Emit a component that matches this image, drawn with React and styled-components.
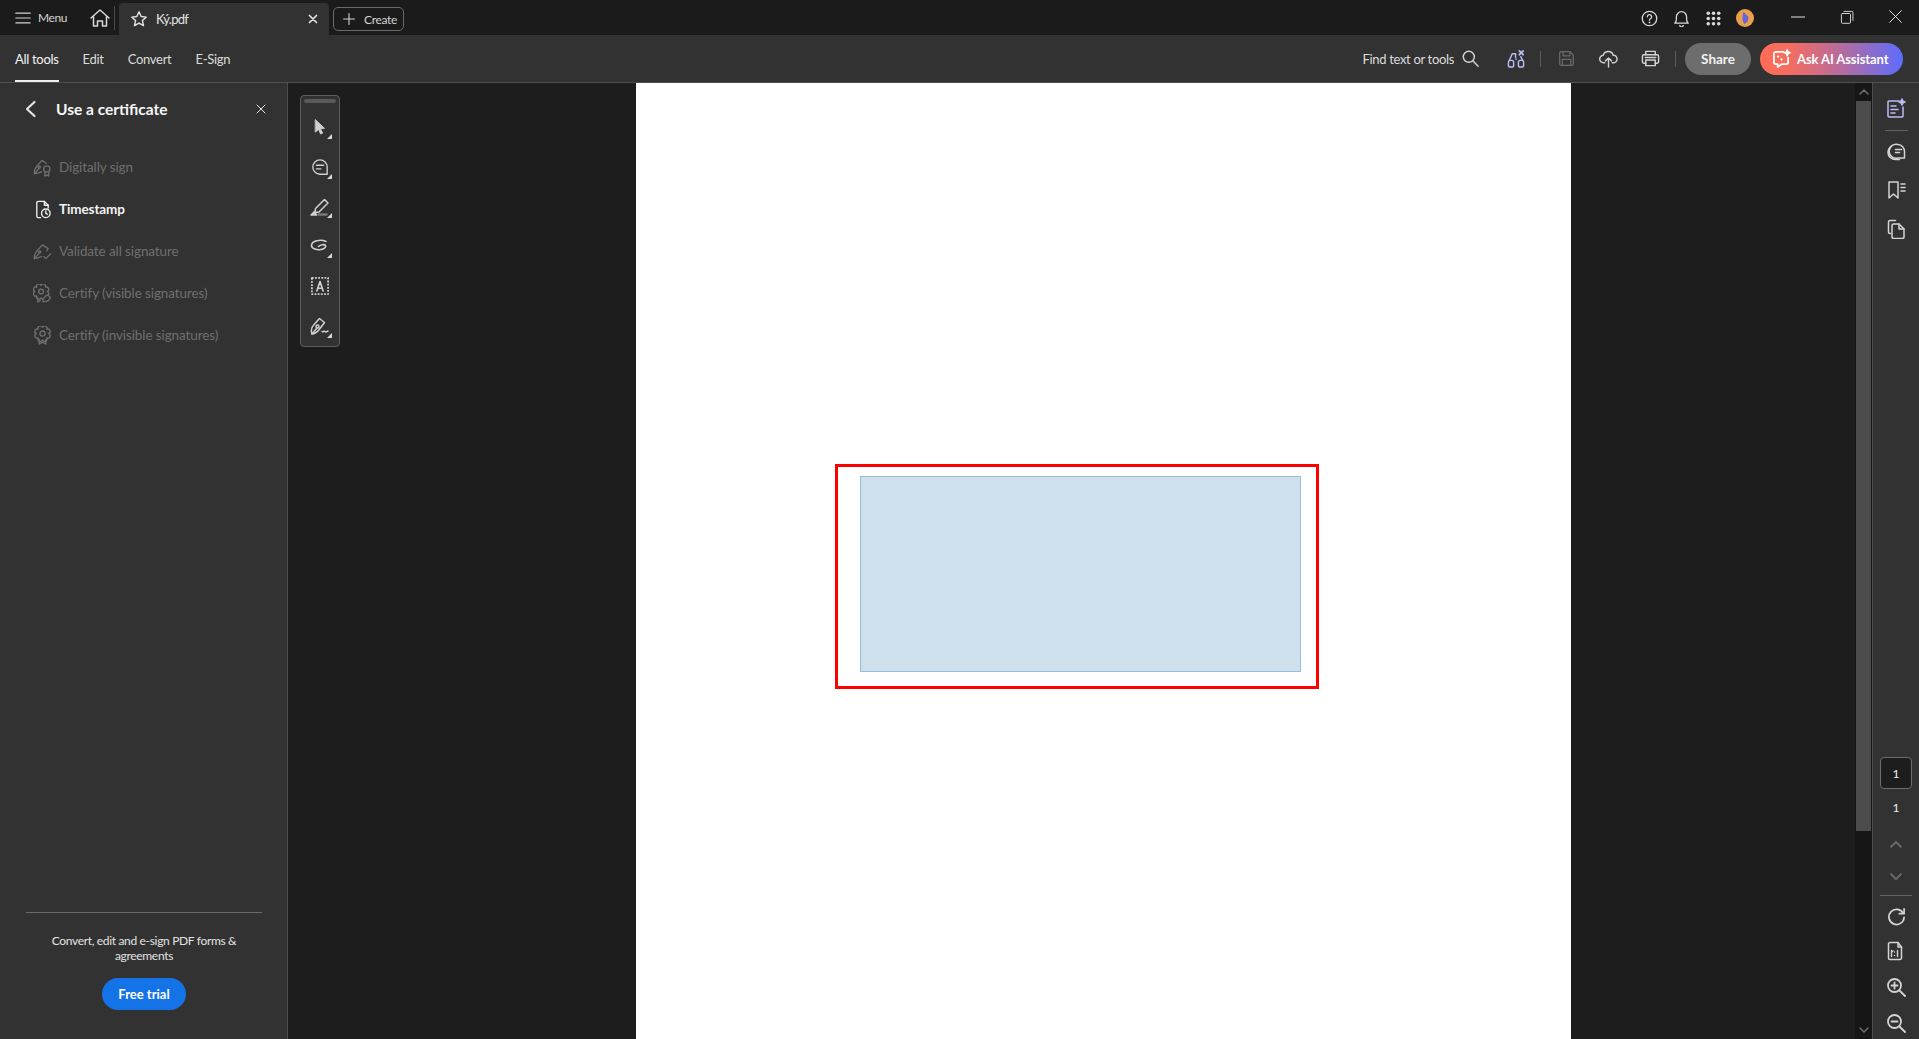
import styled, { createGlobalStyle } from "styled-components";

const GlobalStyle = createGlobalStyle`
  html, body { margin: 0; padding: 0; height: 100%; overflow: hidden; background: #1d1d1d; }
  #root { height: 100%; }
  * { box-sizing: border-box; }
  body { font-family: "Lato", "Open Sans", sans-serif; color: #e6e6e6; }
`;

const Shell = styled.div`
  display: flex;
  flex-direction: column;
  width: 1919px;
  height: 1039px;
  overflow: hidden;
`;

/* ---- title bar ---- */
const TitleBar = styled.header`
  display: flex;
  align-items: flex-end;
  height: 35px;
  flex: none;
  background: #1b1b1b;
`;
const MenuButton = styled.div`
  display: flex;
  align-items: center;
  gap: 7px;
  height: 35px;
  width: 90px;
  padding-left: 15px;
  font-size: 12px;
  letter-spacing: -0.4px;
  color: #d4d4d4;
`;
const HomeWrap = styled.div`
  display: flex;
  align-items: center;
  height: 35px;
  width: 29px;
  color: #d8d8d8;
  &::after {
    content: "";
    width: 1px;
    height: 24px;
    margin-left: 4px;
    background: #4a4a4a;
  }
`;
const Tab = styled.div`
  display: flex;
  align-items: center;
  width: 210px;
  height: 32px;
  padding: 0 11px 0 11px;
  border-radius: 4px 4px 0 0;
  background: #323232;
  font-size: 13px;
  letter-spacing: -0.7px;
  color: #e2e2e2;
  span { margin-left: 8px; flex: 1; }
`;
const CreateButton = styled.div`
  display: flex;
  align-items: center;
  gap: 9px;
  width: 71px;
  height: 24px;
  margin: 0 0 4px 4px;
  padding-left: 9px;
  border: 1px solid #6a6a6a;
  border-radius: 5px;
  font-size: 12px;
  letter-spacing: -0.3px;
  color: #d4d4d4;
`;
const TitleRight = styled.div`
  display: flex;
  align-items: center;
  height: 35px;
  margin-left: auto;
  color: #d8d8d8;
`;
const TopIcon = styled.div`
  display: flex;
  justify-content: center;
  width: 32px;
  padding-top: 1px;
`;
const WinControls = styled.div`
  display: flex;
  margin-left: 30px;
  margin-right: 17px;
  gap: 35px;
  align-items: center;
  padding-bottom: 2px;
  color: #e4e4e4;
`;

/* ---- tool bar ---- */
const ToolBar = styled.div`
  display: flex;
  align-items: center;
  height: 48px;
  flex: none;
  padding: 0 16px 0 15px;
  background: #323232;
  border-bottom: 1px solid #505050;
`;
const NavLink = styled.a`
  position: relative;
  display: flex;
  align-items: center;
  height: 47px;
  margin-right: 24px;
  font-size: 13px;
  letter-spacing: -0.3px;
  color: ${(p) => (p.$active ? "#f4f4f4" : "#dcdcdc")};
  ${(p) =>
    p.$active &&
    `&::after {
      content: "";
      position: absolute;
      left: 0;
      right: 0;
      bottom: 0;
      height: 2px;
      background: #f0f0f0;
    }`}
`;
const ToolRight = styled.div`
  display: flex;
  align-items: center;
  margin-left: auto;
  height: 47px;
  color: #d4d4d4;
`;
const FindText = styled.span`
  font-size: 13px;
  letter-spacing: -0.33px;
  color: #dcdcdc;
  margin-right: 8px;
`;
const ToolIcon = styled.div`
  display: flex;
  margin-left: ${(p) => p.$ml || 0}px;
  color: ${(p) => p.$color || "inherit"};
`;
const VDivider = styled.div`
  width: 1px;
  height: 16px;
  margin-left: ${(p) => p.$ml}px;
  background: #5c5c5c;
`;
const ShareButton = styled.button`
  width: 66px;
  height: 32px;
  margin-left: 9px;
  padding: 0;
  border: 0;
  border-radius: 16px;
  background: #6d6d6d;
  color: #f2f2f2;
  font: 700 13.5px "Lato", sans-serif;
`;
const AskButton = styled.button`
  display: flex;
  align-items: center;
  gap: 6px;
  width: 143px;
  height: 32px;
  margin-left: 9px;
  padding: 0 0 0 12px;
  border: 0;
  border-radius: 16px;
  background: linear-gradient(90deg, #ff6c55 0%, #f56d60 20%, #b46c9f 58%, #5c6dfd 100%);
  color: #fff;
  font: 700 13px "Lato", sans-serif;
  letter-spacing: -0.1px;
  white-space: nowrap;
`;

/* ---- main area ---- */
const Main = styled.main`
  display: flex;
  flex: 1;
  min-height: 0;
`;
const Sidebar = styled.aside`
  display: flex;
  flex-direction: column;
  width: 288px;
  flex: none;
  background: #323232;
  border-right: 1px solid #4c4c4c;
`;
const SideHead = styled.div`
  display: flex;
  align-items: center;
  height: 44px;
  margin-top: 4px;
  padding: 0 21px 0 20px;
  color: #e4e4e4;
`;
const SideTitle = styled.h2`
  flex: 1;
  margin: 0 0 0 16px;
  font-size: 15.5px;
  font-weight: 700;
  color: #f6f6f6;
`;
const SideList = styled.ul`
  list-style: none;
  margin: 15px 0 0;
  padding: 0;
`;
const SideItem = styled.li`
  display: flex;
  align-items: center;
  gap: 7px;
  height: 42px;
  padding-left: 33px;
  font-size: 13.5px;
  letter-spacing: -0.1px;
  font-weight: ${(p) => (p.$active ? 700 : 400)};
  color: ${(p) => (p.$active ? "#f2f2f2" : "#6f6f6f")};
`;
const SideFoot = styled.div`
  margin: auto 25px 0 26px;
  height: 127px;
  border-top: 1px solid #6a6a6a;
  padding-top: 20px;
  text-align: center;
  font-size: 12px;
  line-height: 15px;
  letter-spacing: -0.33px;
  color: #e2e2e2;
`;
const TrialButton = styled.button`
  display: block;
  width: 84px;
  height: 32px;
  margin: 15px auto 0;
  padding: 0;
  border: 0;
  border-radius: 16px;
  background: #1473e6;
  color: #fff;
  font: 700 13px "Lato", sans-serif;
`;
const Gutter = styled.div`
  width: 348px;
  flex: none;
  padding: 12px 0 0 12px;
  background: #1d1d1d;
`;
const QuickTools = styled.div`
  position: relative;
  display: flex;
  flex-direction: column;
  align-items: center;
  width: 40px;
  height: 252px;
  padding-top: 11px;
  background: #323232;
  border: 1px solid #5e5e5e;
  border-radius: 4px;
  color: #d0d0d0;
  &::before {
    content: "";
    position: absolute;
    top: 3px;
    left: 3px;
    right: 3px;
    height: 4px;
    border-radius: 2px;
    background: #5a5a5a;
  }
`;
const QuickTool = styled.div`
  position: relative;
  display: flex;
  align-items: center;
  justify-content: center;
  width: 38px;
  height: 40px;
  ${(p) =>
    p.$corner &&
    `&::after {
      content: "";
      position: absolute;
      right: 7px;
      bottom: 8px;
      border-style: solid;
      border-width: 0 0 5px 5px;
      border-color: transparent transparent #d8d8d8 transparent;
    }`}
`;
const Page = styled.section`
  width: 935px;
  flex: none;
  padding: 381px 0 0 199px;
  background: #fff;
`;
const RedFrame = styled.div`
  width: 484px;
  height: 225px;
  padding: 9px 0 0 22px;
  border: 3px solid #ff0000;
`;
const BlueField = styled.div`
  width: 441px;
  height: 196px;
  background: #cde0ec;
  border: 1px solid #97bdd8;
`;
const Backdrop = styled.div`
  width: 284px;
  flex: none;
  background: #1d1d1d;
`;
const ScrollBar = styled.div`
  display: flex;
  flex-direction: column;
  width: 17px;
  flex: none;
  background: #161616;
  color: #6f6f6f;
`;
const ScrollArrow = styled.div`
  display: flex;
  align-items: center;
  justify-content: center;
  height: ${(p) => p.$h}px;
`;
const ScrollThumb = styled.div`
  height: 730px;
  margin-left: 1px;
  width: 15px;
  background: #4c4c4c;
`;
const ScrollSpace = styled.div`
  flex: 1;
`;
const RightPanel = styled.aside`
  display: flex;
  flex-direction: column;
  align-items: center;
  width: 47px;
  flex: none;
  background: #323232;
  border-left: 1px solid #4c4c4c;
  color: #d4d4d4;
`;
const PanelIcon = styled.div`
  display: flex;
  align-items: center;
  justify-content: center;
  width: 100%;
  height: ${(p) => p.$h || 38}px;
  padding-top: ${(p) => p.$pt || 0}px;
  color: ${(p) => p.$color || "inherit"};
`;
const PanelRule = styled.div`
  width: ${(p) => p.$w}px;
  height: 1px;
  margin: ${(p) => p.$m};
  background: #626262;
`;
const PanelSpace = styled.div`
  flex: 1;
`;
const PageBox = styled.div`
  display: flex;
  align-items: center;
  justify-content: center;
  width: 32px;
  height: 32px;
  border: 1px solid #6c6c6c;
  border-radius: 4px;
  background: #1d1d1d;
  font-size: 12px;
  color: #f0f0f0;
`;
const PageCount = styled.div`
  margin: 7px 0 9px;
  height: 24px;
  line-height: 24px;
  font-size: 12px;
  color: #f0f0f0;
`;

const Svg = styled.svg.attrs((p) => ({
  viewBox: "0 0 20 20",
  width: p.$size || 20,
  height: p.$size || 20,
  fill: "none",
  stroke: "currentColor",
  strokeWidth: p.$sw || 1.5,
  strokeLinecap: "round",
  strokeLinejoin: "round",
}))`
  display: block;
  flex: none;
`;

// scalloped seal outline for the certificate icons
function seal(cx, cy, r, n) {
  let d = "";
  for (let i = 0; i < n; i++) {
    const a = (i / n) * Math.PI * 2;
    const x = (cx + r * Math.cos(a)).toFixed(2);
    const y = (cy + r * Math.sin(a)).toFixed(2);
    d += i === 0 ? `M${x} ${y}` : `A2.300 2.300 0 0 1 ${x} ${y}`;
  }
  const x0 = (cx + r).toFixed(2);
  return `${d}A2.300 2.300 0 0 1 ${x0} ${cy}Z`;
}

const ITEMS = [
  {
    label: "Digitally sign",
    icon: (
      <>
        <path d="M1.500 16.500c-.5-3 1-6 2.500-8L9.500 2.500l4.500 3" />
        <path d="M1.500 16.500l5-5.500M1.500 16.500c2.500-.3 5-1 7.500-2" />
        <circle cx="6.500" cy="9.500" r="1.200" />
        <circle cx="14.500" cy="11.500" r="3.300" />
        <path d="M12.500 15v4l2-1 2 1v-4" />
      </>
    ),
  },
  {
    label: "Timestamp",
    active: true,
    icon: (
      <>
        <path d="M8 18.500H5.500A1.500 1.500 0 0 1 4 17V3a1.500 1.500 0 0 1 1.500-1.500H12l4 4v3" />
        <path d="M12 1.500v4h4" />
        <circle cx="13.500" cy="14" r="4.500" />
        <path d="M13.500 11.500V14l1.800 1" />
      </>
    ),
  },
  {
    label: "Validate all signature",
    icon: (
      <>
        <path d="M1.500 17.500c-.5-3 1-6 2.500-8L10 3l6 4-1.500 2.500" />
        <path d="M1.500 17.500l5-5.500M1.500 17.500c2.500-.3 5-1 7.500-2" />
        <circle cx="7" cy="10.500" r="1.200" />
        <path d="M11.500 15.500l2 2 5-5" />
      </>
    ),
  },
  {
    label: "Certify (visible signatures)",
    icon: (
      <>
        <path d={seal(8.500, 8, 6.500, 8)} />
        <circle cx="8.500" cy="8" r="2.500" />
        <path d="M5 14v5l2.500-1.500" />
        <path d="M10.500 18.500c-.3-2 .3-3.500 1.500-4.500l3-2.500 3.500 2.500-2 3c-1.500 1.300-3.500 1.700-6 1.500z" fill="#323232" />
      </>
    ),
  },
  {
    label: "Certify (invisible signatures)",
    icon: (
      <>
        <path d={seal(10, 8, 6.500, 8)} />
        <circle cx="10" cy="8" r="2.700" />
        <path d="M6.500 14v5l3.500-2 3.500 2v-5" />
      </>
    ),
  },
];

function App() {
  return (
    <Shell>
      <GlobalStyle />
      <TitleBar>
        <MenuButton>
          <Svg $size={16}>
            <path d="M1 4h18M1 10h18M1 16h18" />
          </Svg>
          Menu
        </MenuButton>
        <HomeWrap>
          <Svg>
            <path d="M1 10l9-8 9 8M3.500 8.500V18h4v-5h5v5h4V8.500" />
          </Svg>
        </HomeWrap>
        <Tab>
          <Svg $size={18} $sw={1.6}>
            <path d="M10 2l2.400 5.300 5.600.6-4.200 3.800 1.200 5.700-5-2.900-5 2.900 1.200-5.700L2 7.900l5.600-.6z" />
          </Svg>
          <span>Ký.pdf</span>
          <Svg $size={10} $sw={3.400}>
            <path d="M3 3l14 14M17 3L3 17" />
          </Svg>
        </Tab>
        <CreateButton>
          <Svg $size={12} $sw={1.800}>
            <path d="M10 1v18M1 10h18" />
          </Svg>
          Create
        </CreateButton>
        <TitleRight>
          <TopIcon>
            <Svg $size={17}>
              <circle cx="10" cy="10" r="8.500" />
              <path d="M7.500 8a2.500 2.500 0 1 1 3.500 2.300c-.7.400-1 .8-1 1.700" />
              <path d="M10 14.500v.2" strokeWidth="2" />
            </Svg>
          </TopIcon>
          <TopIcon>
            <Svg $size={17}>
              <path d="M2 15.500c1.500-1 2-2.500 2-5V8a6 6 0 0 1 12 0v2.500c0 2.500.5 4 2 5z" />
              <path d="M8 18a2 2 0 0 0 4 0" />
            </Svg>
          </TopIcon>
          <TopIcon>
            <Svg $size={15}>
              {[3, 10, 17].map((y) =>
                [3, 10, 17].map((x) => <circle key={`${x}-${y}`} cx={x} cy={y} r="2.400" fill="currentColor" stroke="none" />)
              )}
            </Svg>
          </TopIcon>
          <TopIcon>
            <Svg $size={18}>
              <circle cx="10" cy="10" r="10" fill="#e8a04c" stroke="none" />
              <path d="M8 3l6 6-1 5-4 3-2-6z" fill="#6a62d8" stroke="none" />
            </Svg>
          </TopIcon>
          <WinControls>
            <Svg $size={14} $sw={1.600}>
              <path d="M0 10h20" />
            </Svg>
            <Svg $size={14} $sw={1.300}>
              <rect x="2" y="5" width="13" height="14" rx="1.500" />
              <path d="M5.500 2H17a1.500 1.500 0 0 1 1.500 1.500V15" />
            </Svg>
            <Svg $size={13} $sw={1.500}>
              <path d="M1 1l18 18M19 1L1 19" />
            </Svg>
          </WinControls>
        </TitleRight>
      </TitleBar>

      <ToolBar>
        <NavLink $active>All tools</NavLink>
        <NavLink>Edit</NavLink>
        <NavLink>Convert</NavLink>
        <NavLink>E-Sign</NavLink>
        <ToolRight>
          <FindText>Find text or tools</FindText>
          <Svg $size={17} $sw={1.700}>
            <circle cx="8" cy="8" r="6.500" />
            <path d="M13 13l6 6" />
          </Svg>
          <ToolIcon $ml={28} $color="#b9bdf7">
            <Svg $size={19}>
              <path d="M2.500 12l3-7h3.500M9 5v4M16.500 12l-2-4" />
              <rect x="1.500" y="12" width="5.500" height="7" rx="2" />
              <rect x="12" y="12" width="5.500" height="7" rx="2" />
              <path d="M9.500 10.500v.5" />
              <path d="M13 2l4 4M17 2l-4 4" strokeWidth="2" />
            </Svg>
          </ToolIcon>
          <VDivider $ml={14} />
          <ToolIcon $ml={17} $color="#6a6a6a">
            <Svg $size={17}>
              <path d="M2 3.500A1.500 1.500 0 0 1 3.500 2H14l4 4v10.500a1.500 1.500 0 0 1-1.500 1.500h-13A1.500 1.500 0 0 1 2 16.500z" />
              <path d="M6 2v5h8V2M5 18v-7h10v7" />
            </Svg>
          </ToolIcon>
          <ToolIcon $ml={24}>
            <Svg $size={19}>
              <path d="M6 14.500H5a4 4 0 0 1-.5-8 5.500 5.500 0 0 1 10.500 0 4 4 0 0 1 0 8h-1" />
              <path d="M10 19V9.500M6.800 12.500L10 9.500l3.200 3" />
            </Svg>
          </ToolIcon>
          <ToolIcon $ml={23}>
            <Svg $size={19}>
              <path d="M5 6V2.500h10V6" />
              <path d="M5 15H3a1.500 1.500 0 0 1-1.500-1.500v-6A1.500 1.500 0 0 1 3 6h14a1.500 1.500 0 0 1 1.500 1.500v6A1.500 1.500 0 0 1 17 15h-2" />
              <rect x="5" y="11.500" width="10" height="6" />
              <path d="M4.500 9h11" />
            </Svg>
          </ToolIcon>
          <VDivider $ml={15} />
          <ShareButton>Share</ShareButton>
          <AskButton>
            <Svg $size={19} $sw={1.800}>
              <path d="M12 3H4a2 2 0 0 0-2 2v9a2 2 0 0 0 2 2h2v3l4-3h5a2 2 0 0 0 2-2V9" />
              <path d="M6.500 8v.1M10 11v.1" strokeWidth="2.400" />
              <path d="M16 1l.8 2.200L19 4l-2.200.8L16 7l-.8-2.200L13 4l2.200-.8z" fill="currentColor" />
            </Svg>
            Ask AI Assistant
          </AskButton>
        </ToolRight>
      </ToolBar>

      <Main>
        <Sidebar>
          <SideHead>
            <Svg $sw={2.200}>
              <path d="M14.500 3L7 10l7.500 7" />
            </Svg>
            <SideTitle>Use a certificate</SideTitle>
            <Svg $size={10} $sw={2}>
              <path d="M2 2l16 16M18 2L2 18" />
            </Svg>
          </SideHead>
          <SideList>
            {ITEMS.map((item) => (
              <SideItem key={item.label} $active={item.active}>
                <Svg $size={19} $sw={1.400}>
                  {item.icon}
                </Svg>
                {item.label}
              </SideItem>
            ))}
          </SideList>
          <SideFoot>
            Convert, edit and e-sign PDF forms &amp; agreements
            <TrialButton>Free trial</TrialButton>
          </SideFoot>
        </Sidebar>

        <Gutter>
          <QuickTools>
            <QuickTool $corner>
              <Svg $size={18} $sw={1}>
                <path d="M5 2l10 9.500-4.500.3 2.500 5-2.300 1-2.300-5L5 15.500z" fill="currentColor" />
              </Svg>
            </QuickTool>
            <QuickTool $corner>
              <Svg $size={18}>
                <path d="M10 2a8 8 0 1 0 0 16h8v-8a8 8 0 0 0-8-8z" />
                <path d="M6 8h8M6 12h5" />
              </Svg>
            </QuickTool>
            <QuickTool $corner>
              <Svg $size={20}>
                <path d="M5.500 11.500L14.500 2.500l3.500 3.500-9 9-4 .5z" />
                <path d="M1 18l3.500-3.500 2 3.500z" fill="currentColor" />
                <path d="M8.500 17.500h8" stroke="#777" strokeWidth="2.500" />
              </Svg>
            </QuickTool>
            <QuickTool $corner>
              <Svg $size={20} $sw={1.600}>
                <path d="M16 5.500C11 3 1.500 4.500 1.500 9.500c0 3.500 6 4.800 9.500 4 2.500-.6 5.500-2 4.500-4-1-1.500-5-1-7 1" />
              </Svg>
            </QuickTool>
            <QuickTool>
              <Svg $size={18} $sw={2}>
                <path d="M1 1h18v18H1z" strokeDasharray="2 1.500" strokeLinecap="butt" />
                <path d="M6.500 15.500L10 5l3.500 10.500M7.500 12.500h5" strokeWidth="1.800" />
              </Svg>
            </QuickTool>
            <QuickTool $corner>
              <Svg $size={20}>
                <path d="M2 18c-1.500-4 0-7.500 2.500-10l5-5.500 5 4-4.500 6c-2 3-5 5-8 5.500z" />
                <path d="M2 18l5-6" />
                <circle cx="7.500" cy="10.500" r="1.500" />
                <path d="M12 15.500c1 1 2-1 3 0s2 0 3-.5" />
              </Svg>
            </QuickTool>
          </QuickTools>
        </Gutter>

        <Page>
          <RedFrame>
            <BlueField />
          </RedFrame>
        </Page>

        <Backdrop />

        <ScrollBar>
          <ScrollArrow $h={18}>
            <Svg $size={10} $sw={3}>
              <path d="M2 14l8-8 8 8" />
            </Svg>
          </ScrollArrow>
          <ScrollThumb />
          <ScrollSpace />
          <ScrollArrow $h={18}>
            <Svg $size={10} $sw={3}>
              <path d="M2 6l8 8 8-8" />
            </Svg>
          </ScrollArrow>
        </ScrollBar>

        <RightPanel>
          <PanelIcon $h={44} $pt={6} $color="#b9bdf7">
            <Svg $size={20}>
              <path d="M13 3H3a1 1 0 0 0-1 1v14a1 1 0 0 0 1 1h13a1 1 0 0 0 1-1V9" />
              <path d="M5 8h5M5 11.500h7M5 15h4" />
              <path d="M16 1l.9 2.100L19 4l-2.100.9L16 7l-.9-2.100L13 4l2.100-.9z" fill="currentColor" />
            </Svg>
          </PanelIcon>
          <PanelRule $w={23} $m="3px 0 0" />
          <PanelIcon $h={42}>
            <Svg>
              <path d="M12 2.500a7 7 0 0 1 6.500 7v6.500H12a7 7 0 1 1 0-13.500z" />
              <path d="M5 4.500a7.500 7.500 0 0 0-3 6c0 4 3.500 7 7.500 7h4" />
              <path d="M9.500 7.500h6M9.500 10.500h4" />
            </Svg>
          </PanelIcon>
          <PanelIcon $h={34}>
            <Svg>
              <path d="M3 2h9v16l-4.500-4L3 18z" />
              <path d="M15 4h4M15 7.500h4M15 11h4" strokeWidth="1.600" />
            </Svg>
          </PanelIcon>
          <PanelIcon $h={44}>
            <Svg>
              <path d="M4.500 14.500H4A1.500 1.500 0 0 1 2.500 13V3A1.500 1.500 0 0 1 4 1.500h5.500" />
              <path d="M6 6.500A1.500 1.500 0 0 1 7.500 5H13l5 5v8a1.500 1.500 0 0 1-1.500 1.500h-9A1.500 1.500 0 0 1 6 18z" />
              <path d="M13 5v5h5" />
            </Svg>
          </PanelIcon>

          <PanelSpace />

          <PageBox>1</PageBox>
          <PageCount>1</PageCount>
          <PanelIcon $h={30} $color="#666">
            <Svg $size={14} $sw={3}>
              <path d="M3 14l7-7 7 7" />
            </Svg>
          </PanelIcon>
          <PanelIcon $h={36} $color="#666">
            <Svg $size={14} $sw={3}>
              <path d="M3 6l7 7 7-7" />
            </Svg>
          </PanelIcon>
          <PanelRule $w={32} $m="0 0 1px" />
          <PanelIcon $h={38}>
            <Svg $size={19} $sw={1.800}>
              <path d="M17 6.500A8 8 0 1 0 18 11" />
              <path d="M18 2v5h-5" />
            </Svg>
          </PanelIcon>
          <PanelIcon $h={32}>
            <Svg $size={20}>
              <path d="M12 1.500H4A1.500 1.500 0 0 0 2.500 3v14A1.500 1.500 0 0 0 4 18.500h10a1.500 1.500 0 0 0 1.500-1.500V6z" />
              <path d="M12 1.500V6h3.500" />
              <path d="M5.500 9.500v6M7 10L5.500 11M8.500 11v.1M8.500 14.500v.1M11.500 9.500v6" strokeWidth="1.400" />
            </Svg>
          </PanelIcon>
          <PanelIcon $h={40}>
            <Svg $sw={1.800}>
              <circle cx="8.500" cy="8.500" r="6.500" />
              <path d="M13.500 13.500L19 19M5.500 8.500h6M8.500 5.500v6" />
            </Svg>
          </PanelIcon>
          <PanelIcon $h={32}>
            <Svg $sw={1.800}>
              <circle cx="8.500" cy="8.500" r="6.500" />
              <path d="M13.500 13.500L19 19M5.500 8.500h6" />
            </Svg>
          </PanelIcon>
        </RightPanel>
      </Main>
    </Shell>
  );
}

export default App;
